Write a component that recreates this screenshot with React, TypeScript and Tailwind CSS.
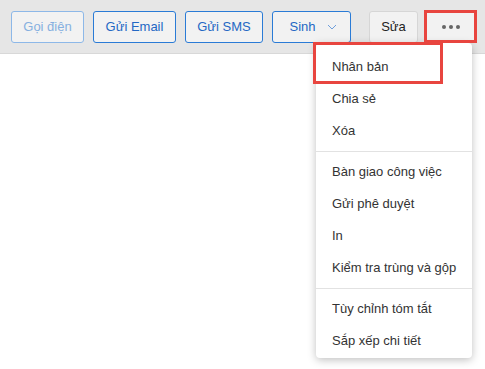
import React from "react";

const menuGroups: string[][] = [
  ["Nhân bản", "Chia sẻ", "Xóa"],
  ["Bàn giao công việc", "Gửi phê duyệt", "In", "Kiểm tra trùng và gộp"],
  ["Tùy chỉnh tóm tắt", "Sắp xếp chi tiết"],
];

function BlueButton({ label, width, disabled }: { label: string; width: string; disabled?: boolean }) {
  return (
    <button
      className={
        disabled
          ? `${width} h-8 rounded-[3px] border border-[#8db8e8] bg-[#f2f2f2] text-[13px] text-[#86b0e0]`
          : `${width} h-8 rounded-[3px] border border-[#2a7bd6] bg-[#f2f2f2] text-[13px] text-[#2468c4]`
      }
    >
      {label}
    </button>
  );
}

export default function App() {
  return (
    <div
      className="relative w-[485px] h-[369px] bg-white overflow-hidden"
      style={{ fontFamily: '"Liberation Sans", Arial, sans-serif' }}
    >
      <div className="flex items-start h-[54px] pt-[11px] pl-[11px] bg-[#e6e6e6] border-b border-[#d8d8d8]">
        <BlueButton label="Gọi điện" width="w-[73px]" disabled />
        <div className="ml-[9px]">
          <BlueButton label="Gửi Email" width="w-[83px]" />
        </div>
        <div className="ml-[9px]">
          <BlueButton label="Gửi SMS" width="w-[78px]" />
        </div>
        <button className="ml-[9px] w-[79px] h-8 flex items-center justify-center gap-[11px] pl-[3px] rounded-[3px] border border-[#2a7bd6] bg-[#f2f2f2] text-[13px] text-[#2468c4]">
          <span>Sinh</span>
          <svg width="10" height="6" viewBox="0 0 10 6" fill="none">
            <path d="M1 1l4 4 4-4" stroke="#6f9fdc" strokeWidth="1" />
          </svg>
        </button>
        <button className="ml-[18px] w-[49px] h-8 rounded-[3px] border border-[#d6d6d6] bg-[#f2f2f2] text-[13px] text-[#222]">
          Sửa
        </button>
        <button className="ml-[7px] w-[51px] h-8 flex items-center justify-center gap-[3px] rounded-[3px] border border-[#d6d6d6] bg-[#f2f2f2]">
          <span className="w-1 h-1 rounded-full bg-[#666]" />
          <span className="w-1 h-1 rounded-full bg-[#666]" />
          <span className="w-1 h-1 rounded-full bg-[#666]" />
        </button>
      </div>

      <div className="absolute left-[316px] top-[43px] w-[156px] pt-2 pb-[1px] bg-white rounded-[4px] shadow-[0_2px_8px_rgba(0,0,0,0.25)]">
        {menuGroups.map((group, gi) => (
          <div key={gi}>
            {gi > 0 && <div className="my-1 h-px bg-[#e2e2e2]" />}
            {group.map((item) => (
              <div key={item} className="h-8 flex items-center pl-4 text-[13px] text-[#333]">
                {item}
              </div>
            ))}
          </div>
        ))}
      </div>

      {/* annotation boxes */}
      <div className="absolute left-[424px] top-[10px] w-[53px] h-[33px] border-[3px] border-[#e8453f]" />
      <div className="absolute left-[313px] top-[42px] w-[130px] h-[42px] border-[3px] border-[#e8453f]" />
    </div>
  );
}
